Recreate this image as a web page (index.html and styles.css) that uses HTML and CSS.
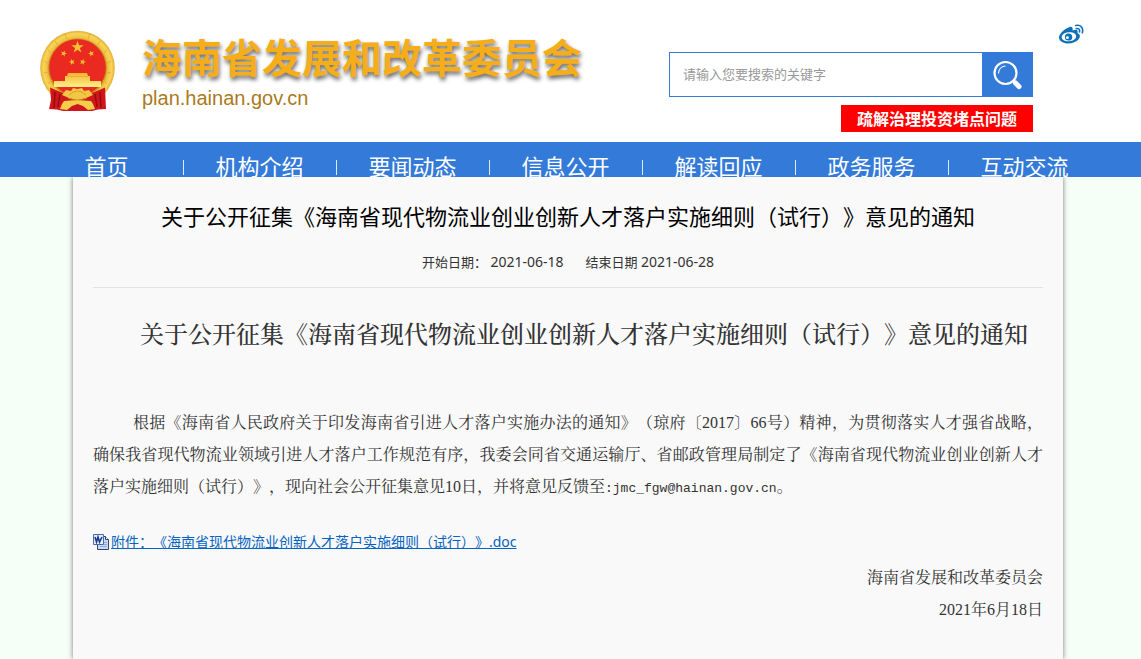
FILE: index.html
```html
<!DOCTYPE html>
<html lang="zh-CN">
<head>
<meta charset="utf-8">
<meta name="viewport" content="width=device-width, initial-scale=1">
<title>海南省发展和改革委员会</title>
<link rel="stylesheet" href="styles.css">
</head>
<body>
<header class="header">
  <a class="brand" href="#">
    <svg class="emblem" viewBox="0 0 76 82" aria-hidden="true">
      <defs>
        <radialGradient id="ring" cx="37.5" cy="38" r="38" gradientUnits="userSpaceOnUse">
          <stop offset=".75" stop-color="#c98a1c"/>
          <stop offset=".8" stop-color="#efc244"/>
          <stop offset=".9" stop-color="#f8d558"/>
          <stop offset="1" stop-color="#dba52e"/>
        </radialGradient>
        <linearGradient id="wall" x1="0" y1="0" x2="0" y2="1">
          <stop offset="0" stop-color="#f3b52f"/>
          <stop offset="1" stop-color="#fff08a"/>
        </linearGradient>
        <path id="star" d="M0-6.5 1.5-2H6.2L2.4.8 3.8 5.3 0 2.5-3.8 5.3-2.4.8-6.2-2H-1.5Z"/>
      </defs>
      <circle cx="37.5" cy="38" r="37.3" fill="url(#ring)"/>
      <circle cx="37.5" cy="37.5" r="28.3" fill="#ea2a20"/>
      <path d="M8 20 12 24M4 31l5 3M4 43l5-1M8 54l4-4M15 11l3 5M25 4l2 5M67 20l-4 4M71 31l-5 3M71 43l-5-1M67 54l-4-4M60 11l-3 5M50 4l-2 5" stroke="#e3ae38" stroke-width="1" fill="none"/>
      <g fill="#f2c233">
        <use href="#star" transform="translate(37.5 17.3)"/>
        <use href="#star" transform="translate(23.7 23.5) rotate(20) scale(.5)"/>
        <use href="#star" transform="translate(32 32) rotate(-15) scale(.5)"/>
        <use href="#star" transform="translate(42.7 32) rotate(15) scale(.5)"/>
        <use href="#star" transform="translate(51.3 23.5) rotate(-20) scale(.5)"/>
      </g>
      <path d="M28 43H47L48 46H50V51H61V57H14V51H25V46H27Z" fill="url(#wall)"/>
      <path d="M27 46.500H48" stroke="#e5a02a" stroke-width=".6"/>
      <path d="M10 57.500 18 61 28 65 37.500 69 47 65 57 61 65 57.500 66 79 58 79.500 52 81H23L17 79.500 9 79 11 70Z" fill="#cf171b"/>
      <path d="M15 62 14 78M20 64 18 77M55 64 57 77M60 62 61 78" stroke="#94090e" stroke-width="1.400"/>
      <path d="M24 71 37 70 51 71 53 74 55 79 48 80 43 76 37.500 74 32 76 27 80 20 79 22 74Z" fill="#f6cf4a"/>
      <path d="M26 60 31 61 33 58 37.500 59 42 58 44 61 49 60 53 65 46 68 37.500 70 29 68 22 65Z" fill="#f2c743"/>
      <path d="M29 65q8.500-8 17 0M28 68q9 4 19 0" fill="none" stroke="#d09a2a" stroke-width=".8"/>
    </svg>
    <span class="brand-text">
      <strong class="brand-name">海南省发展和改革委员会</strong>
      <span class="brand-url">plan.hainan.gov.cn</span>
    </span>
  </a>
  <div class="tools">
    <div class="tools-main">
      <form class="search">
        <input class="search-input" type="text" aria-label="搜索" placeholder="请输入您要搜索的关键字">
        <button class="search-button" type="button" aria-label="搜索">
          <svg width="30" height="30" viewBox="0 0 30 30" fill="none" stroke="#fff" stroke-linecap="round" aria-hidden="true">
            <circle cx="13.500" cy="13" r="11" stroke-width="2.200"/>
            <path d="M6.500 13a7.500 7.500 0 0 1 6.500-7" stroke-width="1.200"/>
            <path d="m21.500 21 2 2" stroke-width="3"/>
            <path d="m23.500 23 3.500 3.500" stroke-width="5"/>
          </svg>
        </button>
      </form>
      <a class="hot-link" href="#">疏解治理投资堵点问题</a>
    </div>
    <a class="weibo" href="#" aria-label="微博">
      <svg width="25" height="20" viewBox="0 0 25 20" aria-hidden="true">
        <path fill="#0d70b8" fill-rule="evenodd" d="M9.500 3.400C12 2.300 14 2.800 13.700 5.500L13.600 6.400C16.500 5.200 19.200 5.600 18.600 8.300 18.300 9.100 18.700 9.300 19.600 9.700 21.400 10.700 21.200 13.300 19.600 15.200 17.500 17.900 13.500 19.400 9.300 19.400 4.200 19.400 0 17 0 13.400 0 9.800 5.200 5 9.500 3.400ZM9.500 8.300C5.500 8.600 2.500 10.900 2.700 13.500 2.900 16 6.300 17.600 10.200 17.300 14.300 17 17.400 14.600 17.200 12 17 9.500 13.600 7.900 9.500 8.300ZM9.500 9.400a3.700 3.600 0 1 0 .1 7.200 3.700 3.600 0 1 0-.1-7.200ZM8.400 12.300a1.500 1.400 0 1 1 0 2.800 1.500 1.400 0 1 1 0-2.800Z"/>
        <path d="M17.300 4.600c2.500-.4 3.800 1.200 3.200 3.300M16.800 1.500c5-1.100 8 2.500 6.500 7.200" fill="none" stroke="#0d70b8" stroke-width="1.600" stroke-linecap="round"/>
      </svg>
    </a>
  </div>
</header>
<nav class="nav">
  <ul class="nav-list">
    <li><a href="#">首页</a></li>
    <li><a href="#">机构介绍</a></li>
    <li><a href="#">要闻动态</a></li>
    <li><a href="#">信息公开</a></li>
    <li><a href="#">解读回应</a></li>
    <li><a href="#">政务服务</a></li>
    <li><a href="#">互动交流</a></li>
  </ul>
</nav>
<div class="page">
  <main class="content">
    <h1 class="title">关于公开征集《海南省现代物流业创业创新人才落户实施细则（试行）》意见的通知</h1>
    <p class="dates">
      <span>开始日期： <time>2021-06-18</time></span>
      <span>结束日期 <time>2021-06-28</time></span>
    </p>
    <article class="article">
      <h2 class="subtitle">关于公开征集《海南省现代物流业创业创新人才落户实施细则（试行）》意见的通知</h2>
      <p class="text">根据《海南省人民政府关于印发海南省引进人才落户实施办法的通知》（琼府〔2017〕66号）精神，为贯彻落实人才强省战略，确保我省现代物流业领域引进人才落户工作规范有序，我委会同省交通运输厅、省邮政管理局制定了《海南省现代物流业创业创新人才落户实施细则（试行）》，现向社会公开征集意见10日，并将意见反馈至<span class="email">:jmc_fgw@hainan.gov.cn</span>。</p>
      <p class="attachment">
        <svg width="17" height="17" viewBox="0 0 17 17" aria-hidden="true">
          <path d="M4.500 2.500h8l3 3v10h-11v-13Z" fill="#c9daf6" stroke="#34456e"/>
          <path d="M12.500 2.500v3h3" fill="#fff" stroke="#34456e"/>
          <path d="M11 8.500h3M11 10.500h3M7 12.500h7" stroke="#8eaade"/>
          <path d="M.5.500h10v10H.500Z" fill="#e8effc" stroke="#4a69ab"/>
          <path d="m2 3 1.500 5L5 3l1.500 5L9 3" fill="none" stroke="#173b91" stroke-width="1.600"/>
        </svg>
        <a href="#">附件：《海南省现代物流业创新人才落户实施细则（试行）》.doc</a>
      </p>
      <p class="sign">海南省发展和改革委员会</p>
      <p class="sign">2021年6月18日</p>
    </article>
  </main>
</div>
</body>
</html>
```
FILE: styles.css
```css
* {
  box-sizing: border-box;
}

body {
  margin: 0;
  background: #f5fff7;
  color: #333;
  font-family: "Noto Sans", "Noto Sans CJK SC", sans-serif;
  font-size: 14px;
  text-spacing-trim: space-all;
}

h1, h2, p, ul {
  margin: 0;
  padding: 0;
}

.header {
  display: flex;
  justify-content: space-between;
  align-items: flex-start;
  min-height: 142px;
  padding: 0 57px 10px 40px;
  background: #fff;
}

.brand {
  display: flex;
  gap: 26px;
  padding-top: 30px;
  text-decoration: none;
}

.emblem {
  width: 76px;
  height: 82px;
}

.brand-text {
  display: flex;
  flex-direction: column;
}

.brand-name {
  color: #f5ad19;
  font-family: "Noto Sans CJK SC", sans-serif;
  font-size: 40px;
  line-height: 52px;
  text-shadow: 1px 3px 4px rgba(0, 0, 0, .6);
  white-space: nowrap;
}

.brand-url {
  color: #ab7a1c;
  font-family: "Liberation Sans", sans-serif;
  font-size: 20px;
  line-height: 32px;
}

.tools {
  display: flex;
  gap: 26px;
}

.tools-main {
  display: flex;
  flex-direction: column;
  align-items: flex-end;
  gap: 8px;
  padding-top: 52px;
}

.search {
  display: flex;
  width: 364px;
  height: 45px;
  border: 1px solid #347ad8;
}

.search-input {
  flex: 1;
  min-width: 0;
  padding: 0 13px 2px;
  border: 0;
  background: #fff;
  font-family: "Noto Sans CJK SC", sans-serif;
  font-size: 13px;
}

.search-input::placeholder {
  color: #999;
}

.search-button {
  display: flex;
  align-items: center;
  justify-content: center;
  width: 50px;
  padding: 0;
  border: 0;
  background: #347ad8;
}

.hot-link {
  padding: 0 16px;
  background: #f00;
  color: #fff;
  font-family: "Noto Sans CJK SC", sans-serif;
  font-size: 16px;
  font-weight: bold;
  line-height: 27px;
  text-decoration: none;
}

.weibo {
  padding-top: 24px;
}

.nav {
  height: 35px;
  padding: 0 40px 0 30px;
  background: #347ad8;
  overflow: hidden;
}

.nav-list {
  display: flex;
  max-width: 1071px;
  margin: 0 auto;
  list-style: none;
}

.nav-list li {
  display: flex;
  flex: 1;
  align-items: center;
  justify-content: center;
  position: relative;
  font-family: "Noto Sans CJK SC", sans-serif;
  font-size: 22px;
  line-height: 46px;
}

.nav-list li + li::before {
  content: "";
  position: absolute;
  left: 0;
  top: 18px;
  width: 1px;
  height: 15px;
  background: #dcebff;
}

.nav-list a {
  color: #fff;
  text-decoration: none;
}

.page {
  padding-right: 5px;
  overflow: hidden;
}

.content {
  max-width: 990px;
  min-height: calc(100vh - 177px);
  margin: 0 auto;
  padding: 16px 20px 30px;
  background: #f9f9f9;
  box-shadow: 0 0 5px #777;
}

.title {
  color: #000;
  font-family: "Noto Sans CJK SC", sans-serif;
  font-size: 22px;
  font-weight: normal;
  line-height: 44px;
  text-align: center;
}

.dates {
  display: flex;
  justify-content: center;
  gap: 22px;
  padding: 12px 0;
  border-bottom: 1px solid #e3e3e3;
  font-size: 13px;
  line-height: 26px;
}

.dates time {
  font-size: 14px;
}

.article {
  padding-top: 30px;
  font-family: "Liberation Serif", "Noto Serif CJK SC", serif;
  font-size: 16px;
  line-height: 32px;
}

.subtitle {
  font-family: "Noto Serif CJK SC", serif;
  font-size: 24px;
  font-weight: 500;
  line-height: 30px;
  text-align: center;
  text-indent: 32px;
}

.text {
  padding-top: 59px;
  text-align: justify;
  text-indent: 40px;
}

.email {
  font-family: "Liberation Mono", monospace;
  font-size: 13px;
}

.attachment {
  display: flex;
  align-items: center;
  gap: 1px;
  padding: 25px 0 8px;
  font-family: "Noto Sans", "Noto Sans CJK SC", sans-serif;
  font-size: 14px;
  line-height: 24px;
}

.attachment a {
  color: #0563c1;
}

.sign {
  text-align: right;
}
```
